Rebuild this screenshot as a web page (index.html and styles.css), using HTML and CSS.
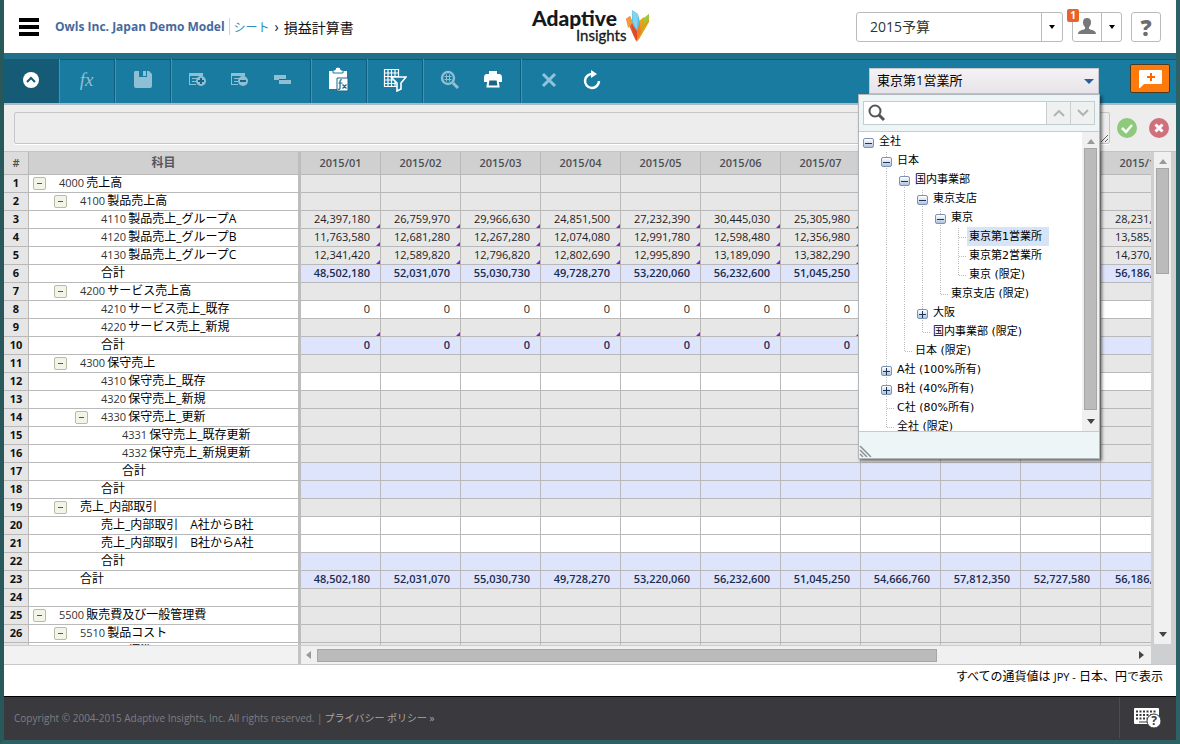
FILE: index.html
```html
<!DOCTYPE html>
<html lang="ja">
<head>
<meta charset="utf-8">
<title>損益計算書</title>
<link rel="stylesheet" href="styles.css">
</head>
<body>
<div class="frame">
  <header class="top">
    <button class="menu" aria-label="メニュー"><i></i><i></i><i></i></button>
    <nav class="crumbs">
      <a class="model" href="#">Owls Inc. Japan Demo Model</a>
      <a class="sheet" href="#">シート</a>
      <span class="sep">›</span>
      <span class="page">損益計算書</span>
    </nav>
    <svg class="logo" width="120" height="40" viewBox="0 0 120 40" role="img" aria-label="Adaptive Insights">
      <text x="0" y="19" class="logo-a">Adaptive</text>
      <text x="44" y="34" class="logo-b">Insights</text>
      <path d="M94 12l4-3 5 12 1 13z" fill="#e8602c"/>
      <path d="M94 12l4-3 3 7-5 5z" fill="#f29a3c"/>
      <path d="M107 14l5-4 1 8-7 15z" fill="#f0a21e"/>
      <path d="M111 12l6-5v8l-11 19z" fill="#d9a21b"/>
      <path d="M111 12l6-5v5l-5 5z" fill="#9cc93a"/>
      <path d="M100 3l6 4 2 8-3 19-5-20z" fill="#55bfe6"/>
      <path d="M100 3l6 4-1 16-4-8z" fill="#86d3ee"/>
      <path d="M99 16l6 8v11l-4-8z" fill="#df4b26"/>
      <path d="M108 15l-3 9v11l4-10z" fill="#f07c22"/>
    </svg>
    <div class="tools">
      <div class="pick version">
        <select aria-label="バージョン"><option>2015予算</option></select>
        <span class="arrow"></span>
      </div>
      <div class="user">
        <button aria-label="ユーザー"><svg width="18" height="17" viewBox="0 0 18 17"><path d="M9 0c3 0 4 2 4 4 0 3-1 4-2 5v2c2 1 7 1 7 5H0c0-4 5-4 7-5V9C6 8 5 7 5 4c0-2 1-4 4-4z" fill="#77787a"/></svg></button>
        <button class="drop" aria-label="ユーザーメニュー"><span class="tri"></span></button>
        <span class="badge">1</span>
      </div>
      <button class="help" aria-label="ヘルプ">?</button>
    </div>
  </header>

  <div class="toolbar">
    <div class="group dark"><button aria-label="折りたたむ"><svg width="18" height="18" viewBox="0 0 18 18"><circle cx="9" cy="9" r="8" fill="#fff"/><path d="M5 11l4-4 4 4" fill="none" stroke="#155a74" stroke-width="2"/></svg></button></div>
    <div class="group dim"><button class="fx" aria-label="数式">fx</button></div>
    <div class="group dim"><button aria-label="保存"><svg width="18" height="18" viewBox="0 0 18 18"><path d="M1 0h4v6h8V0h2l3 3v12q0 2-2 2H2q-2 0-2-2V1z" fill="#8fbfd3"/><path d="M9 0h3v5H9z" fill="#8fbfd3"/></svg></button></div>
    <div class="group dim trio">
      <button aria-label="行を追加"><svg width="18" height="16" viewBox="0 0 18 16"><path d="M0 1h14v3H0zM0 4h1v9H0zM3 6h6v1H3zM3 9h4v1H3zM0 12h7v1H0z" fill="#8fbfd3"/><circle cx="12" cy="9" r="5" fill="#8fbfd3"/><path d="M9 9h6M12 6v6" stroke="#1a6584" stroke-width="2"/></svg></button>
      <button aria-label="行を削除"><svg width="18" height="16" viewBox="0 0 18 16"><path d="M0 1h14v3H0zM0 4h1v9H0zM3 6h6v1H3zM3 9h4v1H3zM0 12h7v1H0z" fill="#8fbfd3"/><circle cx="12" cy="9" r="5" fill="#8fbfd3"/><path d="M9 9h6" stroke="#1a6584" stroke-width="2"/></svg></button>
      <button aria-label="行を分割"><svg width="17" height="12" viewBox="0 0 17 12"><path d="M0 1h12v4H5v1H0zM5 6h12v4H5z" fill="#8fbfd3"/><path d="M5 5.5h7" stroke="#1a6584"/></svg></button>
    </div>
    <div class="group"><button aria-label="数式を貼り付け"><svg width="22" height="26" viewBox="0 0 22 26"><path d="M1 4h18v8h-6v10H1z" fill="#fff"/><path d="M5 3h2q0-3 3-3t3 3h2v3H5z" fill="#fff" stroke="#1a7ba0"/><path d="M9 11h11v13H9z" fill="#fff" stroke="#1a6584"/><path d="M14 13q-2-1-2 2v6q0 2-2 1M10.500 16h4M14.500 17.500l4 4M18.500 17.500l-4 4" fill="none" stroke="#17668a" stroke-width="1.200"/></svg></button></div>
    <div class="group"><button aria-label="フィルター"><svg width="24" height="24" viewBox="0 0 24 24"><path d="M1.500 1.500h14v17h-14zM1 5h15M1 8.500h15M1 12h15M1 15.500h12M5 1v18M8.500 1v18M12 1v18" fill="none" stroke="#fff" stroke-width="1.200"/><path d="M8 9h15l-5 6v6l-4 2v-8z" fill="#1a7ba0" stroke="#fff" stroke-width="1.600"/></svg></button></div>
    <div class="group duo">
      <button aria-label="詳細"><svg width="20" height="20" viewBox="0 0 20 20"><circle cx="8" cy="8" r="6" fill="none" stroke="#8fbfd3" stroke-width="2.400"/><path d="M6.500 4.500v7M9.500 4.500v7M4.500 6.500h7M4.500 9.500h7" stroke="#8fbfd3"/><path d="M13 13l5 5" stroke="#8fbfd3" stroke-width="3"/></svg></button>
      <button aria-label="印刷"><svg width="20" height="18" viewBox="0 0 20 18"><path d="M6 0h8v3H6z" fill="#fff"/><path d="M3 3h14q2 1 2 3v5h-4V8H5v3H1V6q0-2 2-3z" fill="#fff"/><path d="M5.500 8.500h9l1 7h-11z" fill="#1a6584" stroke="#fff" stroke-width="2"/></svg></button>
    </div>
    <div class="group last">
      <button aria-label="取消"><svg width="16" height="16" viewBox="0 0 16 16"><path d="M2 2l12 12M14 2L2 14" stroke="#8fc4dc" stroke-width="3"/></svg></button>
      <button aria-label="更新"><svg width="18" height="20" viewBox="0 0 18 20"><path d="M10 4a7 7 0 1 0 6 7" fill="none" stroke="#fff" stroke-width="2.500"/><path d="M8 0l6 4-6 4z" fill="#fff"/></svg></button>
    </div>
    <div class="entity">
      <select aria-label="レベル"><option>東京第1営業所</option></select>
      <span class="caret"></span>
      <div class="panel">
        <div class="find">
          <label for="q"><svg width="18" height="18" viewBox="0 0 18 18"><circle cx="7" cy="7" r="5.500" fill="none" stroke="#555" stroke-width="2"/><path d="M11 11l5 5" stroke="#555" stroke-width="3"/></svg></label>
          <input id="q" type="text" aria-label="検索">
          <button aria-label="前へ"><svg width="12" height="8" viewBox="0 0 12 8"><path d="M1 7l5-5 5 5" fill="none" stroke="#b4b4b4" stroke-width="2"/></svg></button>
          <button aria-label="次へ"><svg width="12" height="8" viewBox="0 0 12 8"><path d="M1 1l5 5 5-5" fill="none" stroke="#b4b4b4" stroke-width="2"/></svg></button>
        </div>
        <div class="treebox">
          <div class="tree" id="tree"></div>
          <div class="vbar"><span class="up"></span><span class="thumb long"></span><span class="down"></span></div>
        </div>
        <div class="panel-foot"><svg width="14" height="12" viewBox="0 0 14 12"><path d="M1 1l11 11M1 5l7 7M1 9l3 3" stroke="#8c9296" stroke-width="1.500"/></svg></div>
      </div>
    </div>
    <button class="comment" aria-label="コメントを追加"><svg width="23" height="18" viewBox="0 0 23 18"><path d="M1 0h21q1 0 1 1v12q0 1-1 1H5l-4 4H0V1z" fill="#fff"/><path d="M12 3v8M8 7h8" stroke="#f60" stroke-width="2"/></svg></button>
  </div>

  <div class="formula">
    <textarea aria-label="数式"></textarea>
    <button aria-label="適用"><svg width="20" height="20" viewBox="0 0 20 20"><circle cx="10" cy="10" r="10" fill="#8fc97c"/><path d="M5 10l4 4 6-7" fill="none" stroke="#fff" stroke-width="2.500"/></svg></button>
    <button aria-label="取消"><svg width="20" height="20" viewBox="0 0 20 20"><circle cx="10" cy="10" r="10" fill="#d0707c"/><path d="M6.500 6.500l7 7M13.500 6.500l-7 7" stroke="#fff" stroke-width="3"/></svg></button>
  </div>

  <main class="sheet-area">
    <div class="view">
      <table class="grid">
        <colgroup><col class="c-no"><col class="c-name"><col span="11" class="c-val"></colgroup>
        <thead><tr id="head"></tr></thead>
        <tbody id="rows"></tbody>
      </table>
    </div>
    <div class="vbar side"><span class="up"></span><span class="thumb"></span><span class="down on"></span></div>
    <div class="hrow">
      <div class="hpad"></div>
      <div class="hbar"><span class="left"></span><div class="track"><span class="thumb"></span></div><span class="right"></span></div>
    </div>
    <div class="corner"></div>
  </main>

  <p class="note">すべての通貨値は <small>JPY -</small> 日本、円で表示</p>

  <footer class="foot">
    <span class="copy">Copyright © 2004-2015 Adaptive Insights, Inc. All rights reserved. |</span>
    <a href="#">プライバシー ポリシー »</a>
    <button aria-label="キーボードヘルプ"><svg width="28" height="22" viewBox="0 0 28 22"><rect x="0" y="1" width="25" height="16" rx="1" fill="#fff"/><path d="M2 4.500h21M2 8h21M2 11.500h12" stroke="#3a393e" stroke-width="2" stroke-dasharray="2 1.500"/><path d="M5 15h9" stroke="#3a393e"/><circle cx="20" cy="14" r="7" fill="#fff" stroke="#3a393e"/><text x="20" y="18" class="kq">?</text></svg></button>
  </footer>
</div>
<script src="app.js"></script>
</body>
</html>
```

FILE: styles.css
```css
* { box-sizing: border-box; }
html, body { height: 100%; margin: 0; }
body { font-family: "Open Sans", "Noto Sans CJK JP", sans-serif; font-size: 12px; color: #111; background: #2c6165; }
button { border: 0; padding: 0; background: none; font: inherit; display: flex; align-items: center; justify-content: center; }
a { text-decoration: none; }
svg { display: block; }
select { appearance: none; border: 0; background: none; border-radius: 0; font: inherit; color: inherit; min-width: 0; }

.frame { height: 100vh; display: flex; flex-direction: column; border: solid #2c6165; border-width: 0 4px 4px; border-left-color: #28585a; background: #fff; overflow: hidden; }

/* header */
.top { height: 53px; flex: none; display: grid; grid-template-columns: 1fr auto 1fr; align-items: center; padding: 0 15px; }
.menu { width: 20px; height: 18px; flex-direction: column; justify-content: space-between; grid-area: 1 / 1; }
.menu i { width: 20px; height: 4px; background: #000; }
.crumbs { grid-area: 1 / 1; margin-left: 36px; display: flex; align-items: center; white-space: nowrap; }
.model { font-size: 12px; font-weight: 700; color: #46699c; padding-right: 4px; border-right: 1px solid #d8d0c8; }
.sheet { color: #2a8fb8; font-size: 12px; padding-left: 4px; }
.sep { font-size: 14px; padding: 0 5px; }
.page { font-size: 14px; }
.logo { grid-area: 1 / 2; overflow: visible; margin-left: 4px; }
.logo-a { font: 900 21px Lato, sans-serif; fill: #15181d; }
.logo-b { font: 400 15px Lato, sans-serif; fill: #15181d; stroke: #15181d; stroke-width: .3px; }
.tools { grid-area: 1 / 3; justify-self: end; display: flex; gap: 9px; }
.pick { display: grid; width: 207px; height: 30px; border: 1px solid #bbb; border-radius: 3px; }
.pick select { grid-area: 1 / 1; padding: 0 24px 0 13px; font-size: 14px; color: #333; }
.arrow { grid-area: 1 / 1; justify-self: end; width: 21px; border-left: 1px solid #bbb; display: grid; place-items: center; pointer-events: none; }
.arrow::after, .tri { content: ""; border: 3px solid transparent; border-top: 4px solid #000; border-bottom: 0; }
.user { position: relative; display: flex; width: 50px; height: 30px; border: 1px solid #bbb; border-radius: 3px; }
.user button { flex: 1 1 28px; }
.user .drop { flex: 0 0 20px; border-left: 1px solid #bbb; }
.badge { position: absolute; left: -6px; top: -4px; width: 12px; height: 13px; border-radius: 2px; background: #e8622a; color: #fff; font-size: 10px; font-weight: 700; line-height: 13px; text-align: center; }
.help { width: 30px; height: 30px; border: 1px solid #bbb; border-radius: 3px; color: #6d6d6f; font: 900 22px "Open Sans", sans-serif; }

/* toolbar */
.toolbar { flex: none; height: 52px; display: flex; align-items: stretch; background: #1a7ba0; border-top: 6px solid #20708b; border-bottom: 2px solid #adbac2; box-shadow: inset 0 1px #0f5872; }
.group { display: flex; width: 56px; border-right: 1px solid #0f5f80; box-shadow: 1px 0 #4393b2; }
.group button { flex: 1; padding-bottom: 2px; }
.dark { width: 55px; background: #155b76; }
.fx { font: italic 19px "Liberation Serif", serif; color: #8fbfd3; }
.trio { width: 140px; padding: 0 6px; }
.duo { width: 98px; padding: 0 6px; }
.last { width: 98px; padding: 0 6px; border: 0; box-shadow: none; }
.entity { position: relative; display: grid; width: 230px; height: 26px; margin: 9px 31px 0 auto; background: linear-gradient(#f4f2f5, #e6e4e8); border: 1px solid #c2c8cc; }
.entity select { grid-area: 1 / 1; font-size: 13px; padding: 0 7px 2px; color: #000; }
.caret { grid-area: 1 / 1; place-self: center end; margin-right: 4px; border: 5px solid transparent; border-top-color: #2d5f94; border-bottom: 0; pointer-events: none; }
.comment { width: 40px; height: 29px; margin: 5px 6px 0 0; background: #ff7a0d; border: 1px solid #4a3a20; border-radius: 2px; }

/* level tree */
.panel { position: absolute; z-index: 5; top: 25px; right: -2px; width: 242px; background: #eef5f7; border: 1px solid #b0b6ba; box-shadow: 2px 2px 3px #0008; }
.find { display: flex; height: 24px; margin: 6px 4px; border: 1px solid #c3cdd0; background: #fff; }
.find label { padding: 2px 0 0 4px; }
.find input { flex: 1; min-width: 0; border: 0; background: none; outline: 0; }
.find button { width: 24px; background: #eff0f0; border-left: 1px solid #c9cfd1; }
.treebox { display: flex; height: 301px; background: #fff; border: solid #c3cdd0; border-width: 1px 0; }
.tree { flex: 1; overflow: hidden; font: 11px/19px "DejaVu Sans", "Noto Sans CJK JP", sans-serif; color: #000; white-space: nowrap; }
.node { display: flex; height: 19px; }
.g { width: 18px; flex: none; background: repeating-linear-gradient(#fff 0 1px, #bbb 1px 2px) 9px 0 / 1px 100% no-repeat; }
.g.none { background: none; }
.g.tee { background: repeating-linear-gradient(#fff 0 1px, #bbb 1px 2px) 9px 0 / 1px 100% no-repeat, repeating-linear-gradient(90deg, #fff 0 1px, #bbb 1px 2px) 9px 10px / 8px 1px no-repeat; }
.g.end { background: repeating-linear-gradient(#fff 0 1px, #bbb 1px 2px) 9px 0 / 1px 10px no-repeat, repeating-linear-gradient(90deg, #fff 0 1px, #bbb 1px 2px) 9px 10px / 8px 1px no-repeat; }
.g.root { background: none; }
.g button { width: 11px; height: 10px; margin: 6px 0 0 4px; border: 1px solid #7e93b3; border-radius: 2px; background: linear-gradient(#fff, #afc4de); }
.g svg { flex: none; }
.node b { font-weight: 400; padding: 0 7px 0 2px; }
.node b.sel { background: #d6e4f8; }
.panel-foot { height: 26px; display: flex; align-items: end; padding-bottom: 1px; }

/* scroll bars */
.vbar { width: 17px; display: flex; flex-direction: column; align-items: center; background: #f0f0f0; padding: 7px 0; }
.vbar .thumb { width: 13px; height: 106px; background: #bbb; border: 1px solid #a6a6a6; margin-top: 4px; }
.vbar .long { flex: 1; margin: 4px 0 9px; }
.up { border: 4px solid transparent; border-top: 0; border-bottom: 5px solid #999; }
.down { border: 4px solid transparent; border-bottom: 0; border-top: 5px solid #444; margin-top: auto; }
.hbar { flex: 1; display: flex; align-items: center; background: #f0f0f0; padding: 0 7px 0 5px; }
.left { border: 4px solid transparent; border-left: 0; border-right: 5px solid #999; }
.right { border: 4px solid transparent; border-right: 0; border-left: 5px solid #444; }
.track { flex: 1; padding: 0 6px; display: flex; }
.track .thumb { width: 76%; height: 13px; background: #bbb; border: 1px solid #a6a6a6; }

/* formula bar */
.formula { flex: none; height: 46px; display: flex; align-items: center; padding: 0 7px 0 10px; background: #ededed; }
.formula textarea { flex: 1; height: 32px; border: 1px solid #c6c6c6; border-radius: 2px; background: #ededed; box-shadow: 0 1px #fff; margin-right: 7px; outline: 0; resize: both; }
.formula button + button { margin-left: 12px; }

/* grid */
.sheet-area { flex: 1; min-height: 0; display: grid; grid-template-columns: minmax(0, 1fr) 25px; grid-template-rows: minmax(0, 1fr) 19px; border-top: 1px solid #c4c4c4; border-bottom: 1px solid #c8c8c8; }
.view { overflow: hidden; }
.side { width: 25px; border: solid #cfcfcf; border-width: 0 5px 1px 3px; }
.hrow { display: flex; border-top: 1px solid #ccc; }
.hpad { width: 297px; background: #f2f2f2; border-right: 3px solid #c4c4c4; }
.corner { background: #cecfd0; }
.grid { table-layout: fixed; width: 1177px; border-collapse: separate; border-spacing: 0; }
.c-no { width: 25px; }
.c-name { width: 272px; }
.c-val { width: 80px; }
.grid th, .grid td { height: 18px; padding: 0 0 1px; line-height: 16px; border: solid #b9b9b9; border-width: 0 1px 1px 0; overflow: hidden; white-space: nowrap; }
.grid thead th { height: 23px; background: #d0d0d0; color: #4e4e50; font-size: 11px; font-weight: 600; }
.grid thead th.no { background: #dcdcdc; }
.grid tbody th.no { background: #e6e6e6; font-size: 11px; font-weight: 700; }
.grid th.name { border-right: 3px solid #bdbdbd; text-align: left; font-weight: 400; background: #fff; color: #000; }
.grid thead th.name { text-align: center; background: #d0d0d0; color: #5a5560; font-size: 12px; font-weight: 700; }
.line { display: flex; align-items: center; height: 16px; }
.l0 { padding-left: 30px; } .l1 { padding-left: 51px; } .l2 { padding-left: 72px; } .l3 { padding-left: 93px; } .l4 { padding-left: 99px; }
.line button { width: 13px; height: 13px; margin: 0 13px 0 -26px; border: 1px solid #b9bba8; border-radius: 2px; background: #f3f4e8; }
.line button::after { content: ""; width: 5px; height: 1px; background: #555; }
.code { font-size: 11px; margin-right: 2px; color: #333; }
.grid td { position: relative; padding-right: 10px; text-align: right; font-size: 11px; background: #e7e7e7; color: #222; }
.grid .sum td { background: #dde4fc; font-weight: 600; color: #1c2c4c; }
.grid .open td { background: #fff; }
.grid td.cut { text-align: left; padding: 0 0 1px 14px; }
.grid td.mark::after { content: ""; position: absolute; right: 0; bottom: 0; border: 2px solid #8a1cd0; border-top-color: transparent; border-left-color: transparent; }

/* footer */
.note { flex: none; margin: 0; height: 31px; line-height: 24px; padding-right: 13px; text-align: right; font-size: 12px; color: #000; }
.note small { font-size: 11px; }
.foot { flex: none; height: 44px; display: flex; align-items: center; padding: 0 0 2px 10px; background: #3a393e; border-top: 1px solid #000; font-size: 10px; color: #7e7e82; }
.foot a { margin-left: 2px; color: #a5a5a8; }
.foot button { align-self: stretch; width: 57px; margin-left: auto; border-left: 1px solid #4c4c50; }
.kq { font: 700 12px "Open Sans", sans-serif; fill: #3a393e; text-anchor: middle; }
```

FILE: app.js
```js
const head = document.getElementById('head');
head.innerHTML = '<th class="no">#</th><th class="name">科目</th>' +
  Array.from({ length: 11 }, (_, i) => `<th>2015/${String(i + 1).padStart(2, '0')}</th>`).join('');

const totals = ['48,502,180', '52,031,070', '55,030,730', '49,728,270', '53,220,060', '56,232,600', '51,045,250'];
const zeros = Array(7).fill('0');
// level, collapsible, code, name, row kind, values, last column, marked
const rows = [
  [0, 1, '4000', '売上高', ''],
  [1, 1, '4100', '製品売上高', ''],
  [2, 0, '4110', '製品売上_グループA', '', ['24,397,180', '26,759,970', '29,966,630', '24,851,500', '27,232,390', '30,445,030', '25,305,980'], '28,231,', 1],
  [2, 0, '4120', '製品売上_グループB', '', ['11,763,580', '12,681,280', '12,267,280', '12,074,080', '12,991,780', '12,598,480', '12,356,980'], '13,585,', 1],
  [2, 0, '4130', '製品売上_グループC', '', ['12,341,420', '12,589,820', '12,796,820', '12,802,690', '12,995,890', '13,189,090', '13,382,290'], '14,370,', 1],
  [2, 0, '', '合計', 'sum', totals, '56,186,'],
  [1, 1, '4200', 'サービス売上高', ''],
  [2, 0, '4210', 'サービス売上_既存', 'open', zeros],
  [2, 0, '4220', 'サービス売上_新規', '', [], '', 1],
  [2, 0, '', '合計', 'sum', zeros],
  [1, 1, '4300', '保守売上', ''],
  [2, 0, '4310', '保守売上_既存', 'open'],
  [2, 0, '4320', '保守売上_新規', ''],
  [2, 1, '4330', '保守売上_更新', ''],
  [3, 0, '4331', '保守売上_既存更新', ''],
  [3, 0, '4332', '保守売上_新規更新', ''],
  [3, 0, '', '合計', 'sum'],
  [2, 0, '', '合計', 'sum'],
  [1, 1, '', '売上_内部取引', ''],
  [2, 0, '', '売上_内部取引　A社からB社', 'open'],
  [2, 0, '', '売上_内部取引　B社からA社', 'open'],
  [2, 0, '', '合計', 'sum'],
  [1, 0, '', '合計', 'sum', [...totals, '54,666,760', '57,812,350', '52,727,580'], '56,186,'],
  [0, 0, '', '', ''],
  [0, 1, '5500', '販売費及び一般管理費', ''],
  [1, 1, '5510', '製品コスト', ''],
  [4, 0, '', '標準コスト', '']
];
document.getElementById('rows').innerHTML = rows.map(([lv, fold, code, name, kind, vals = [], last = '', mark], n) => {
  let cells = '';
  for (let i = 0; i < 10; i++) cells += `<td${mark && i < 7 ? ' class="mark"' : ''}>${vals[i] || ''}</td>`;
  cells += `<td class="cut">${last}</td>`;
  return `<tr class="${kind}"><th class="no">${n + 1}</th><th class="name"><div class="line l${lv}">` +
    (fold ? '<button aria-label="折りたたむ"></button>' : '') +
    (code ? `<span class="code">${code}</span>` : '') + `<span>${name}</span></div></th>${cells}</tr>`;
}).join('');

// guides: "|" line, " " blank, "t" tee, "e" last branch, "-" expanded, "+" collapsed, "r" expanded root
const nodes = [
  ['r', '全社'], [' -', '日本'], [' |-', '国内事業部'], [' ||-', '東京支店'], [' |||-', '東京'],
  [' ||||t', '東京第1営業所', 1], [' ||||t', '東京第2営業所'], [' ||||e', '東京 (限定)'],
  [' |||e', '東京支店 (限定)'], [' ||+', '大阪'], [' ||e', '国内事業部 (限定)'], [' |e', '日本 (限定)'],
  [' +', 'A社 (100%所有)'], [' +', 'B社 (40%所有)'], [' t', 'C社 (80%所有)'], [' e', '全社 (限定)']
];
const kinds = { '|': '', ' ': 'none', t: 'tee', e: 'end', '-': '', '+': '', r: 'root' };
document.getElementById('tree').innerHTML = nodes.map(([guide, name, sel]) =>
  '<div class="node">' + [...guide].map(g => `<span class="g ${kinds[g]}">` +
    ('-+r'.includes(g) ? `<button aria-label="${name}"><svg width="7" height="7" viewBox="0 0 7 7"><path d="M0 3.500h7${g === '+' ? 'M3.500 0v7' : ''}" stroke="#1c355e"/></svg></button>` : '') +
    '</span>').join('') + `<b class="${sel ? 'sel' : ''}">${name}</b></div>`).join('');
```
